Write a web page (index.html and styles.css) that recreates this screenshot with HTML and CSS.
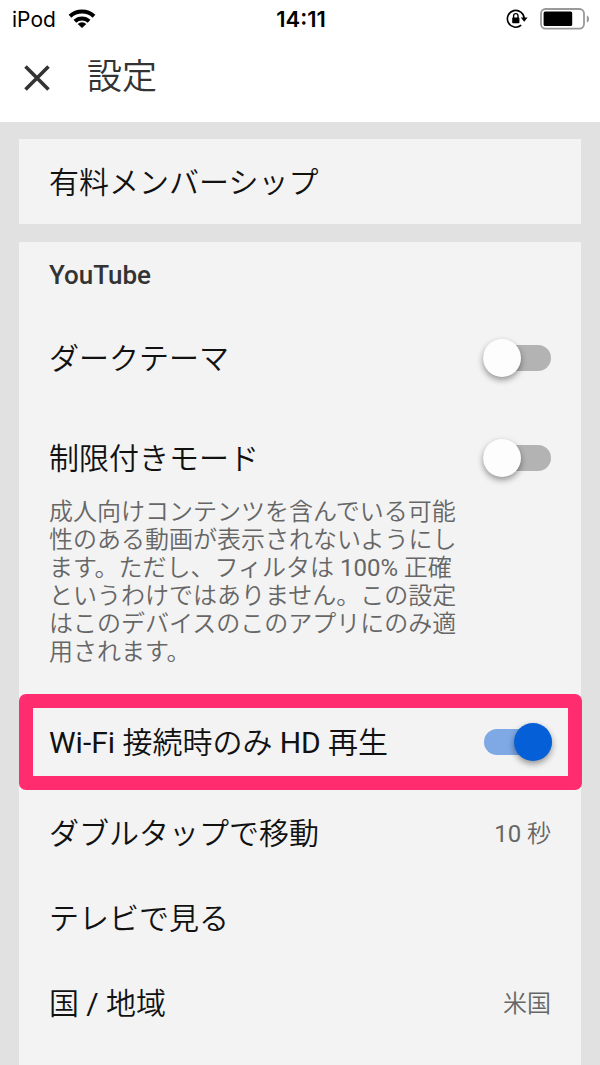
FILE: index.html
```html
<!DOCTYPE html>
<html lang="ja">
<head>
  <meta charset="UTF-8">
  <meta name="viewport" content="width=device-width, initial-scale=1.0">
  <title>設定</title>
  <link rel="stylesheet" href="styles.css">
</head>
<body>
  <header class="header">
    <div class="status-bar">
      <div class="status-left">
        <span>iPod</span>
        <svg class="wifi-icon" width="28" height="20" viewBox="0 0 28 20" aria-hidden="true">
          <g fill="none" stroke="#000" stroke-width="4">
            <path d="M2 7.2a17.5 17.5 0 0 1 24 0"/>
            <path d="M6.9 12.2a10.4 10.4 0 0 1 14.2 0"/>
          </g>
          <path d="M14 19l-4.3-4.1a6.3 6.3 0 0 1 8.6 0z"/>
        </svg>
      </div>
      <div class="status-time">14:11</div>
      <div class="status-right">
        <svg width="22" height="20" viewBox="0 0 22 20" aria-hidden="true">
          <path d="M18.2 9.5a8.4 8.4 0 1 0-3 6.7" fill="none" stroke="#000" stroke-width="1.6"/>
          <path d="M14.8 8.6h6.8l-3.4 4.2z"/>
          <path d="M7.6 9V6.8a2.2 2.2 0 0 1 4.4 0V9" fill="none" stroke="#000" stroke-width="1.4"/>
          <rect x="6.2" y="8.6" width="7.2" height="5.6" rx="0.8"/>
        </svg>
        <svg width="50" height="22" viewBox="0 0 50 22" aria-hidden="true">
          <rect x="1" y="1" width="43" height="19.6" rx="4.5" fill="#fff" stroke="#999" stroke-width="1.8"/>
          <rect x="3.6" y="3.6" width="28.6" height="14.4" rx="1.5"/>
          <path d="M46.8 7.4c3 1 3 6 0 7z" fill="#999"/>
        </svg>
      </div>
    </div>
    <div class="title-bar">
      <button class="close-btn" type="button" aria-label="閉じる">
        <svg width="28" height="28" viewBox="0 0 28 28" aria-hidden="true">
          <path d="M2.5 2.5l23 23M25.5 2.5l-23 23" stroke="#333" stroke-width="3.6"/>
        </svg>
      </button>
      <h1>設定</h1>
    </div>
  </header>

  <main class="settings">
    <section class="card">
      <a class="row" href="#membership"><span class="label">有料メンバーシップ</span></a>
    </section>

    <section class="card card-main">
      <h2>YouTube</h2>

      <div class="row row-tall">
        <label class="label" for="darkTheme">ダークテーマ</label>
        <input class="toggle" type="checkbox" id="darkTheme">
      </div>

      <div class="restricted">
        <div class="row row-tall">
          <label class="label" for="restrictedMode">制限付きモード</label>
          <input class="toggle" type="checkbox" id="restrictedMode" aria-describedby="restrictedInfo">
        </div>
        <p id="restrictedInfo">成人向けコンテンツを含んでいる可能性のある動画が表示されないようにします。ただし、フィルタは <span class="latin">100%</span> 正確というわけではありません。この設定はこのデバイスのこのアプリにのみ適用されます。</p>
      </div>

      <div class="row row-highlight">
        <label class="label" for="wifiHd"><span class="latin">Wi-Fi</span> 接続時のみ <span class="latin">HD</span> 再生</label>
        <input class="toggle" type="checkbox" id="wifiHd" checked>
      </div>

      <a class="row" href="#seek"><span class="label">ダブルタップで移動</span> <span class="value"><span class="latin">10</span> 秒</span></a>
      <a class="row" href="#tv"><span class="label">テレビで見る</span></a>
      <a class="row" href="#region"><span class="label">国 <span class="latin">/</span> 地域</span> <span class="value">米国</span></a>
    </section>
  </main>
</body>
</html>
```
FILE: styles.css
```css
* {
  box-sizing: border-box;
}

body {
  margin: 0;
  min-height: 100vh;
  display: flex;
  flex-direction: column;
  background-color: #e1e1e1;
  color: #111;
  font-family: Roboto, "Noto Sans CJK JP", sans-serif;
}

.header {
  background: #fff;
  padding-bottom: 4px;
}

.status-bar {
  display: grid;
  grid-template-columns: 1fr auto 1fr;
  align-items: center;
  height: 38px;
  padding: 0 10px 0 12px;
  color: #000;
  font-family: Inter, sans-serif;
  font-size: 21px;
}

.status-left,
.status-right {
  display: flex;
  align-items: center;
  gap: 12px;
}

.status-right {
  justify-content: flex-end;
}

.status-time {
  font-size: 22px;
  font-weight: 600;
}

.title-bar {
  display: flex;
  align-items: center;
  gap: 36px;
  height: 80px;
  padding: 0 23px;
}

.close-btn {
  display: flex;
  padding: 0;
  border: none;
  background: none;
  cursor: pointer;
}

.title-bar h1 {
  margin: 0;
  color: #333;
  font-size: 35px;
  font-weight: 350;
  line-height: 42px;
}

.settings {
  flex: 1;
  display: flex;
  flex-direction: column;
  gap: 18px;
  padding: 17px 19px 0;
}

.card {
  background: #f3f3f3;
}

.card-main {
  flex: 1;
}

.card h2 {
  margin: 0;
  padding: 0 30px;
  color: #333;
  font-size: 26px;
  font-weight: 500;
  line-height: 66px;
}

.row {
  display: flex;
  justify-content: space-between;
  align-items: center;
  height: 85px;
  padding: 0 30px;
  color: #111;
  font-size: 30px;
  font-weight: 350;
  text-decoration: none;
}

.row-tall {
  height: 100px;
}

.label {
  padding-bottom: 4px;
}

.latin {
  font-weight: 400;
}

.value {
  padding-bottom: 2px;
  color: #666;
  font-size: 24px;
}

.restricted {
  padding-bottom: 28px;
}

.restricted p {
  margin: -10px 0 0;
  padding: 0 118px 0 30px;
  color: #666;
  font-size: 24px;
  font-weight: 350;
  line-height: 28px;
}

.row-highlight {
  height: 96px;
  margin-right: -1px;
  padding: 0 16px;
  border: 14px solid #ff2d6f;
  border-radius: 7px;
}

.toggle {
  appearance: none;
  display: flex;
  align-items: center;
  width: 68px;
  height: 26px;
  margin: 0;
  border-radius: 13px;
  background: #b3b3b3;
  cursor: pointer;
}

.toggle::before {
  content: "";
  width: 38px;
  height: 38px;
  flex-shrink: 0;
  border-radius: 50%;
  background: #fdfdfd;
  box-shadow: 0 3px 6px rgba(0, 0, 0, 0.4);
}

.toggle:checked {
  justify-content: flex-end;
  background: #7ea9e4;
}

.toggle:checked::before {
  background: #055fd6;
}
```
